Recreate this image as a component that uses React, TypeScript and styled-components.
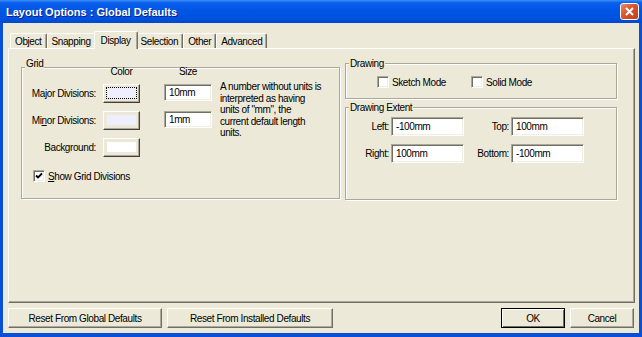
import React from "react";
import styled, { createGlobalStyle } from "styled-components";

const FONT = `"Liberation Sans", Arial, sans-serif`;
const FACE = "#ECE9D8";
const LIGHT = "#FFFFFF";
const SHADOW = "#ACA899";
const DARK = "#716F64";
const XP_BLUE = "#0A4FD8";

const GlobalStyle = createGlobalStyle`
  html, body {
    margin: 0;
    padding: 0;
    background: #fff;
  }
  body {
    font-family: ${FONT};
    font-size: 10px;
    letter-spacing: -0.4px;
    color: #000;
  }
`;

const Window = styled.div`
  width: 642px;
  height: 337px;
  display: flex;
  flex-direction: column;
  overflow: hidden;
`;

const TitleBar = styled.div`
  height: 23px;
  flex: none;
  display: flex;
  align-items: center;
  justify-content: space-between;
  padding: 0 3px 0 6px;
  background: linear-gradient(
    to bottom,
    #3d8ff7 0%,
    #0a5feb 12%,
    #0055e5 45%,
    #0052df 80%,
    #0047cf 100%
  );
`;

const Title = styled.span`
  color: #fff;
  font-weight: bold;
  font-size: 11px;
  letter-spacing: 0;
  text-shadow: 1px 1px 0 #0a1f8a;
`;

const CloseButton = styled.div`
  width: 19px;
  height: 17px;
  box-sizing: border-box;
  border: 1px solid #fff;
  border-radius: 3px;
  background: linear-gradient(135deg, #ea8a6f 0%, #d9532f 45%, #c1401d 100%);
  display: flex;
  align-items: center;
  justify-content: center;
`;

const Frame = styled.div`
  flex: 1;
  min-height: 0;
  display: flex;
  flex-direction: column;
  background: ${FACE};
  border-left: 3px solid ${XP_BLUE};
  border-right: 3px solid ${XP_BLUE};
  border-bottom: 4px solid ${XP_BLUE};
  padding: 8px 4px 5px 5px;
`;

const TabStrip = styled.div`
  height: 17px;
  flex: none;
  display: flex;
  align-items: flex-end;
  padding-left: 2px;
  position: relative;
  z-index: 1;
`;

const Tab = styled.div<{ $active?: boolean }>`
  position: relative;
  z-index: ${(p) => (p.$active ? 2 : 1)};
  height: ${(p) => (p.$active ? 18 : 15)}px;
  margin: ${(p) => (p.$active ? "0 -2px -1px" : "0")};
  padding: ${(p) => (p.$active ? "0 6px 1px" : "0 4px")};
  box-sizing: border-box;
  display: flex;
  align-items: center;
  background: ${FACE};
  border-top: 1px solid ${LIGHT};
  border-left: 1px solid ${LIGHT};
  border-right: 1px solid ${DARK};
  box-shadow: inset -1px 0 0 ${SHADOW};
  border-radius: 2px 2px 0 0;
  white-space: nowrap;
`;

const Panel = styled.div`
  flex: 1;
  min-height: 0;
  display: flex;
  align-items: flex-start;
  gap: 5px;
  padding: 14px 17px 0 12px;
  border: 1px solid;
  border-color: ${LIGHT} ${DARK} ${DARK} ${LIGHT};
  box-shadow: inset -1px -1px 0 ${SHADOW};
`;

const Column = styled.div`
  display: flex;
  flex-direction: column;
  gap: 8px;
`;

const Group = styled.div<{ $w: number; $h: number; $top?: number }>`
  position: relative;
  box-sizing: border-box;
  width: ${(p) => p.$w}px;
  height: ${(p) => p.$h}px;
  margin-top: ${(p) => p.$top ?? 0}px;
  border: 1px solid ${SHADOW};
  box-shadow: inset 1px 1px 0 ${LIGHT}, 1px 1px 0 ${LIGHT};
`;

const Caption = styled.span<{ $top: number }>`
  position: absolute;
  left: 3px;
  top: ${(p) => p.$top}px;
  padding: 0 1px;
  line-height: 12px;
  background: ${FACE};
`;

const GridBody = styled.div`
  display: grid;
  grid-template-columns: 74px 7px 37px 24px 48px 8px 1fr;
  grid-template-rows: 8px 19px 19px 19px auto;
  row-gap: 8px;
`;

const HeaderCell = styled.div<{ $col: number }>`
  grid-column: ${(p) => p.$col};
  text-align: center;
  line-height: 8px;
`;

const RowLabel = styled.div`
  grid-column: 1;
  align-self: center;
  text-align: right;
  white-space: nowrap;
`;

const ColorButton = styled.div`
  grid-column: 3;
  box-sizing: border-box;
  padding: 2px 2px 3px 2px;
  background: ${FACE};
  border: 1px solid;
  border-color: ${LIGHT} #404040 #404040 ${LIGHT};
  box-shadow: inset -1px -1px 0 ${SHADOW};
  display: flex;
`;

const Swatch = styled.div<{ $color: string; $focus?: boolean }>`
  flex: 1;
  box-sizing: border-box;
  border: 1px ${(p) => (p.$focus ? "dotted #000" : "solid transparent")};
  background: ${(p) => p.$color};
  background-clip: padding-box;
`;

const Field = styled.div<{ $h: number }>`
  box-sizing: border-box;
  height: ${(p) => p.$h}px;
  padding: 0 4px;
  display: flex;
  align-items: center;
  background: #fff;
  border: 1px solid;
  border-color: ${SHADOW} ${LIGHT} ${LIGHT} ${SHADOW};
  box-shadow: inset 1px 1px 0 ${DARK}, inset -1px -1px 0 #f1efe2;
  white-space: nowrap;
`;

const SizeField = styled(Field)`
  grid-column: 5;
  align-self: start;
`;

const Hint = styled.div`
  grid-column: 7;
  grid-row: 2 / span 3;
  margin-top: -3px;
  line-height: 11.5px;
  white-space: nowrap;
`;

const CheckRow = styled.label<{ $indent?: number }>`
  display: flex;
  align-items: center;
  gap: 3px;
  padding-left: ${(p) => p.$indent ?? 0}px;
  white-space: nowrap;
`;

const GridCheck = styled(CheckRow)`
  grid-column: 1 / -1;
  margin-top: 5px;
`;

const Box = styled.span`
  width: 12px;
  height: 12px;
  flex: none;
  box-sizing: border-box;
  background: #fff;
  border: 1px solid;
  border-color: ${SHADOW} ${LIGHT} ${LIGHT} ${SHADOW};
  box-shadow: inset 1px 1px 0 ${DARK}, inset -1px -1px 0 #f1efe2;
  display: flex;
  align-items: center;
  justify-content: center;
`;

const ModeRow = styled.div`
  display: grid;
  grid-template-columns: 94px auto;
  padding: 12px 0 0 31px;
`;

const ExtentBody = styled.div`
  display: grid;
  grid-template-columns: 43px 73px 43px 73px;
  grid-auto-rows: 19px;
  column-gap: 2px;
  row-gap: 8px;
  padding-top: 9px;
`;

const ExtentLabel = styled.div`
  align-self: center;
  text-align: right;
  white-space: nowrap;
`;

const ButtonRow = styled.div`
  flex: none;
  display: flex;
  gap: 5px;
  margin-top: 5px;
  padding-right: 1px;
`;

const PushButton = styled.button<{ $w: number; $default?: boolean; $push?: boolean }>`
  width: ${(p) => p.$w}px;
  height: 20px;
  margin: 0 0 0 ${(p) => (p.$push ? "auto" : "0")};
  padding: 0;
  box-sizing: border-box;
  font: inherit;
  letter-spacing: inherit;
  color: #000;
  background: ${FACE};
  border: 1px solid;
  border-color: ${(p) =>
    p.$default ? "#000" : `${LIGHT} ${DARK} ${DARK} ${LIGHT}`};
  box-shadow: ${(p) =>
    p.$default
      ? `inset 1px 1px 0 ${LIGHT}, inset -1px -1px 0 ${DARK}`
      : `inset -1px -1px 0 ${SHADOW}`};
`;

const Check = () => (
  <svg width="8" height="8" viewBox="0 0 8 8">
    <path d="M1 3.5 L3 5.5 L7 1.5" fill="none" stroke="#000" strokeWidth="1.8" />
  </svg>
);

const CheckBox: React.FC<{ checked?: boolean }> = ({ checked }) => (
  <Box>{checked && <Check />}</Box>
);

const tabs = ["Object", "Snapping", "Display", "Selection", "Other", "Advanced"];

const colorRows = [
  { label: <>Ma<u>j</u>or Divisions:</>, color: "#eeeeff", size: "10mm", focus: true },
  { label: <>Mi<u>n</u>or Divisions:</>, color: "#eeeeff", size: "1mm" },
  { label: <>Back<u>g</u>round:</>, color: "#ffffff" },
];

const extent = [
  { label: "Left:", value: "-100mm" },
  { label: "Top:", value: "100mm" },
  { label: "Right:", value: "100mm" },
  { label: "Bottom:", value: "-100mm" },
];

const App: React.FC = () => {
  return (
    <Window>
      <GlobalStyle />
      <TitleBar>
        <Title>Layout Options : Global Defaults</Title>
        <CloseButton>
          <svg width="9" height="9" viewBox="0 0 9 9">
            <path d="M1 1 L8 8 M8 1 L1 8" stroke="#fff" strokeWidth="2" />
          </svg>
        </CloseButton>
      </TitleBar>

      <Frame>
        <TabStrip>
          {tabs.map((t) => (
            <Tab key={t} $active={t === "Display"}>
              {t}
            </Tab>
          ))}
        </TabStrip>

        <Panel>
          <Group $w={320} $h={132} $top={4}>
            <Caption $top={-10}>Grid</Caption>
            <GridBody>
              <HeaderCell $col={3}>Color</HeaderCell>
              <HeaderCell $col={5}>Size</HeaderCell>
              {colorRows.map((r, i) => (
                <React.Fragment key={i}>
                  <RowLabel>{r.label}</RowLabel>
                  <ColorButton>
                    <Swatch $color={r.color} $focus={r.focus} />
                  </ColorButton>
                  {r.size && <SizeField $h={17}>{r.size}</SizeField>}
                </React.Fragment>
              ))}
              <Hint>
                A number without units is
                <br />
                interpreted as having
                <br />
                units of "mm", the
                <br />
                current default length
                <br />
                units.
              </Hint>
              <GridCheck $indent={11}>
                <CheckBox checked />
                <span>
                  <u>S</u>how Grid Divisions
                </span>
              </GridCheck>
            </GridBody>
          </Group>

          <Column>
            <Group $w={272} $h={36}>
              <Caption $top={-6}>Drawing</Caption>
              <ModeRow>
                <CheckRow>
                  <CheckBox />
                  Sketch Mode
                </CheckRow>
                <CheckRow>
                  <CheckBox />
                  Solid Mode
                </CheckRow>
              </ModeRow>
            </Group>

            <Group $w={272} $h={93}>
              <Caption $top={-6}>Drawing Extent</Caption>
              <ExtentBody>
                {extent.map((e) => (
                  <React.Fragment key={e.label}>
                    <ExtentLabel>{e.label}</ExtentLabel>
                    <Field $h={19}>{e.value}</Field>
                  </React.Fragment>
                ))}
              </ExtentBody>
            </Group>
          </Column>
        </Panel>

        <ButtonRow>
          <PushButton $w={154}>Reset From Global Defaults</PushButton>
          <PushButton $w={166}>Reset From Installed Defaults</PushButton>
          <PushButton $w={64} $default $push>
            OK
          </PushButton>
          <PushButton $w={64}>Cancel</PushButton>
        </ButtonRow>
      </Frame>
    </Window>
  );
};

export default App;
